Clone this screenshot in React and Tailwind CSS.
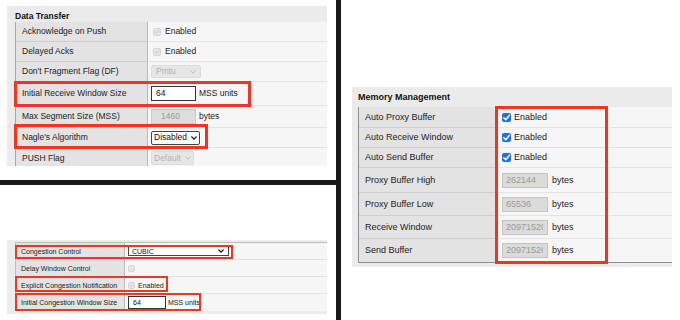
import React from "react";

const Check = ({ color = "#fff", w = 1.6 }) => (
  <svg viewBox="0 0 10 10" className="w-full h-full">
    <polyline points="2,5.2 4.2,7.4 8.2,2.6" fill="none" stroke={color} strokeWidth={w} strokeLinecap="round" strokeLinejoin="round" />
  </svg>
);

const Chevron = ({ color = "#111", w = 1.6, cls = "w-[6px] h-[4px]" }) => (
  <svg viewBox="0 0 8 5" className={cls}>
    <polyline points="1,1 4,4 7,1" fill="none" stroke={color} strokeWidth={w} strokeLinecap="round" strokeLinejoin="round" />
  </svg>
);

const GrayCheck = ({ size = "w-[8px] h-[8px]", checked = true }) => (
  <span className={`${size} shrink-0 rounded-[2px] bg-[#e6e6e6] border border-[#d6d6d6] flex`}>
    {checked && <Check color="#c4c4c4" w={1.4} />}
  </span>
);

const BlueCheck = () => (
  <span className="w-[9px] h-[9px] shrink-0 rounded-[2px] bg-[#1f6fe5] flex">
    <Check color="#fff" w={1.7} />
  </span>
);

const Row = ({ h, label, labelW, children, labelCls = "", last = false, valueCls = "" }) => (
  <div className={`flex ${h}`}>
    <div className={`${labelW} shrink-0 flex items-center bg-[#e3e3e3] border-r border-[#b9b9b9] ${last ? "" : "border-b border-b-[#cdcdcd]"} ${labelCls}`}>
      {label}
    </div>
    <div className={`flex-1 flex items-center gap-[3px] bg-[#f6f6f6] ${last ? "" : "border-b border-b-[#e4e4e4]"} ${valueCls}`}>
      {children}
    </div>
  </div>
);

function DataTransfer() {
  const lw = "w-[132px]";
  const lc = "pl-[6px]";
  const vc = "pl-[3px]";
  return (
    <div className="relative h-[180px] bg-white pt-[6px] pl-[7px]">
      <div className="w-[320px] h-[160px] bg-[#ebebeb] overflow-hidden">
        <div className="h-[16px] pl-[8px] flex items-end pb-[2px] font-bold text-[8.5px] text-[#111]">Data Transfer</div>
        <div className="ml-[8px] border-l border-[#a6a6a6] text-[8.5px] text-[#222]">
          <Row h="h-[20px]" labelW={lw} labelCls={lc} valueCls="pl-[5px]" label="Acknowledge on Push">
            <GrayCheck />
            <span className="ml-[1px]">Enabled</span>
          </Row>
          <Row h="h-[20px]" labelW={lw} labelCls={lc} valueCls="pl-[5px]" label="Delayed Acks">
            <GrayCheck />
            <span className="ml-[1px]">Enabled</span>
          </Row>
          <Row h="h-[20px]" labelW={lw} labelCls={lc} valueCls={vc} label="Don't Fragment Flag (DF)">
            <span className="w-[50px] h-[13px] bg-[#e6e6e6] border border-[#dcdcdc] rounded-[2px] flex items-center justify-between px-[4px] text-[#b0b0b0]">
              Pmtu
              <Chevron color="#b8b8b8" w={1.2} />
            </span>
          </Row>
          <Row h="h-[24px]" labelW={lw} labelCls={lc} valueCls={vc} label="Initial Receive Window Size">
            <span className="w-[45px] h-[15px] bg-white border border-[#333] flex items-center pl-[4px] text-[#111]">64</span>
            <span className="text-[#222]">MSS units</span>
          </Row>
          <Row h="h-[22px]" labelW={lw} labelCls={lc} valueCls={vc} label="Max Segment Size (MSS)">
            <span className="w-[45px] h-[15px] bg-[#dddddd] border border-[#cacaca] flex items-center pl-[9px] text-[#9a9a9a]">1460</span>
            <span>bytes</span>
          </Row>
          <Row h="h-[20px]" labelW={lw} labelCls={lc} valueCls={vc} label="Nagle's Algorithm">
            <span className="w-[49px] h-[14px] bg-white border border-[#444] rounded-[2px] flex items-center justify-between px-[2px] text-[#111]">
              Disabled
              <Chevron color="#111" w={1.8} />
            </span>
          </Row>
          <Row h="h-[20px]" labelW={lw} labelCls={lc} valueCls={vc} last label="PUSH Flag">
            <span className="w-[43px] h-[14px] bg-[#e6e6e6] border border-[#dcdcdc] rounded-[2px] flex items-center justify-between px-[2px] text-[#b4b4b4]">
              Default
              <Chevron color="#b8b8b8" w={1.2} />
            </span>
          </Row>
        </div>
      </div>
      <div className="absolute left-[14px] top-[81px] w-[237px] h-[26px] border-[3px] border-[#ef3622]" />
      <div className="absolute left-[14px] top-[124px] w-[194px] h-[25px] border-[3px] border-[#ef3622]" />
    </div>
  );
}

function Congestion() {
  const lw = "w-[109px]";
  const lc = "pl-[5px]";
  const vc = "pl-[3px]";
  return (
    <div className="relative flex-1 bg-white pt-[55px] pl-[7px]">
      <div className="w-[320px] bg-[#ececec] pl-[8px] pt-[2px] pb-[3px]">
        <div className="border-l border-t border-[#bdbdbd] text-[7px] text-[#222]">
          <Row h="h-[17px]" labelW={lw} labelCls={lc} valueCls={vc} label="Congestion Control">
            <span className="w-[101px] h-[10px] bg-white border border-[#444] flex items-center justify-between pl-[3px] pr-[4px] text-[#111]">
              CUBIC
              <Chevron color="#111" w={1.8} cls="w-[6px] h-[4px]" />
            </span>
          </Row>
          <Row h="h-[17px]" labelW={lw} labelCls={lc} valueCls={vc} label="Delay Window Control">
            <GrayCheck size="w-[7px] h-[7px]" checked={false} />
          </Row>
          <Row h="h-[17px]" labelW={lw} labelCls={lc} valueCls={vc} label="Explicit Congestion Notification">
            <GrayCheck size="w-[7px] h-[7px]" />
            <span>Enabled</span>
          </Row>
          <Row h="h-[17px]" labelW={lw} labelCls={lc} valueCls={vc} last label="Initial Congestion Window Size">
            <span className="w-[38px] h-[13px] bg-white border border-[#333] flex items-center pl-[4px] text-[#111]">64</span>
            <span className="-ml-[1px]">MSS units</span>
          </Row>
        </div>
      </div>
      <div className="absolute left-[15px] top-[60px] w-[218px] h-[14px] border-2 border-[#ef3622]" />
      <div className="absolute left-[15px] top-[91px] w-[153px] h-[16px] border-2 border-[#ef3622]" />
      <div className="absolute left-[15px] top-[108px] w-[186px] h-[18px] border-2 border-[#ef3622]" />
    </div>
  );
}

function Memory() {
  const lw = "w-[138px]";
  const lc = "pl-[6px]";
  const vc = "pl-[5px]";
  const Inp = ({ v }) => (
    <span className="w-[46px] h-[15px] bg-[#dcdbd8] border border-[#c4c4c4] flex items-center pl-[3px] text-[#9a9a9a]">
      <span className="w-[37px] overflow-hidden whitespace-nowrap">{v}</span>
    </span>
  );
  return (
    <div className="relative flex-1 bg-white pt-[87px] pl-[11px]">
      <div className="w-[320px] bg-[#ebebeb] pb-[4px]">
        <div className="h-[20px] pl-[6px] flex items-center font-bold text-[9px] text-[#111]">Memory Management</div>
        <div className="ml-[6px] border-l border-b border-[#8f8f8f] text-[9px] text-[#222]">
          <Row h="h-[21px]" labelW={lw} labelCls={lc} valueCls={vc} label="Auto Proxy Buffer">
            <BlueCheck />
            <span>Enabled</span>
          </Row>
          <Row h="h-[20px]" labelW={lw} labelCls={lc} valueCls={vc} label="Auto Receive Window">
            <BlueCheck />
            <span>Enabled</span>
          </Row>
          <Row h="h-[20px]" labelW={lw} labelCls={lc} valueCls={vc} label="Auto Send Buffer">
            <BlueCheck />
            <span>Enabled</span>
          </Row>
          <Row h="h-[25px]" labelW={lw} labelCls={lc} valueCls={vc} label="Proxy Buffer High">
            <Inp v="262144" />
            <span className="ml-[1px]">bytes</span>
          </Row>
          <Row h="h-[23px]" labelW={lw} labelCls={lc} valueCls={vc} label="Proxy Buffer Low">
            <Inp v="65536" />
            <span className="ml-[1px]">bytes</span>
          </Row>
          <Row h="h-[23px]" labelW={lw} labelCls={lc} valueCls={vc} label="Receive Window">
            <Inp v="20971520" />
            <span className="ml-[1px]">bytes</span>
          </Row>
          <Row h="h-[23px]" labelW={lw} labelCls={lc} valueCls={vc} last label="Send Buffer">
            <Inp v="20971520" />
            <span className="ml-[1px]">bytes</span>
          </Row>
        </div>
      </div>
      <div className="absolute left-[154px] top-[106px] w-[113px] h-[158px] border-[3px] border-[#ef3622]" />
    </div>
  );
}

export default function App() {
  return (
    <div className="w-[680px] h-[320px] bg-white flex overflow-hidden font-['Liberation_Sans',Arial,sans-serif] leading-none">
      <div className="w-[336px] h-full flex flex-col">
        <DataTransfer />
        <div className="h-[5px] bg-[#1a1a1a]" />
        <Congestion />
      </div>
      <div className="w-[5px] h-full bg-[#1a1a1a]" />
      <Memory />
    </div>
  );
}
